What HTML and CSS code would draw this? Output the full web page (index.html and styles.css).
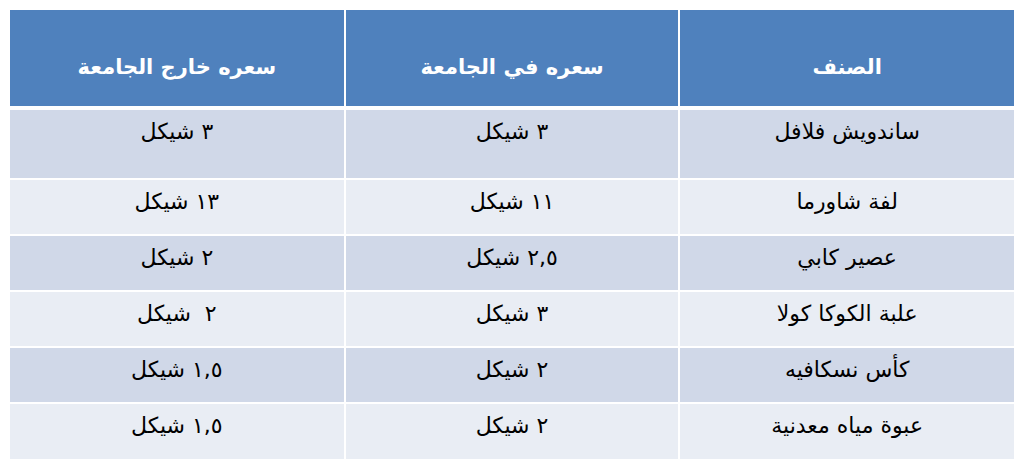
FILE: index.html
```html
<!DOCTYPE html>
<html lang="ar" dir="rtl">
<head>
<meta charset="utf-8">
<title>الأسعار</title>
<link rel="stylesheet" href="styles.css">
</head>
<body>
<table class="prices">
  <thead>
    <tr>
      <th>الصنف</th>
      <th>سعره في الجامعة</th>
      <th>سعره خارج الجامعة</th>
    </tr>
  </thead>
  <tbody>
    <tr class="odd first"><td>ساندويش فلافل</td><td>٣ شيكل</td><td>٣ شيكل</td></tr>
    <tr class="even"><td>لفة شاورما</td><td>١١ شيكل</td><td>١٣ شيكل</td></tr>
    <tr class="odd"><td>عصير كابي</td><td>٢,٥ شيكل</td><td>٢ شيكل</td></tr>
    <tr class="even"><td>علبة الكوكا كولا</td><td>٣ شيكل</td><td>٢&nbsp; شيكل</td></tr>
    <tr class="odd"><td>كأس نسكافيه</td><td>٢ شيكل</td><td>١,٥ شيكل</td></tr>
    <tr class="even"><td>عبوة مياه معدنية</td><td>٢ شيكل</td><td>١,٥ شيكل</td></tr>
  </tbody>
</table>
</body>
</html>
```
FILE: styles.css
```css
html, body {
  margin: 0;
  padding: 0;
  background: #ffffff;
}
body {
  padding: 10px 10px 0 10px;
  font-family: "DejaVu Sans", "Liberation Sans", sans-serif;
}
.prices {
  width: 1004px;
  border-collapse: collapse;
  table-layout: fixed;
}
.prices th,
.prices td {
  box-sizing: border-box;
  border: 2px solid #ffffff;
  text-align: center;
  vertical-align: top;
  font-size: 22px;
  line-height: 26px;
  color: #000000;
  padding: 9px 0 0 0;
}
.prices tr > :first-child { border-right: 0; }
.prices tr > :last-child { border-left: 0; }
.prices thead th {
  background: #4f81bd;
  color: #ffffff;
  font-weight: bold;
  font-size: 21px;
  height: 98px;
  padding-top: 44px;
  border-top: 0;
  border-bottom: 4px solid #ffffff;
}
.prices tbody tr { height: 56px; }
.prices tbody tr.first { height: 71px; }
.prices tr.odd td { background: #d0d8e8; }
.prices tr.even td { background: #e9edf4; }
.prices tbody tr:last-child td { border-bottom: 0; }
```
